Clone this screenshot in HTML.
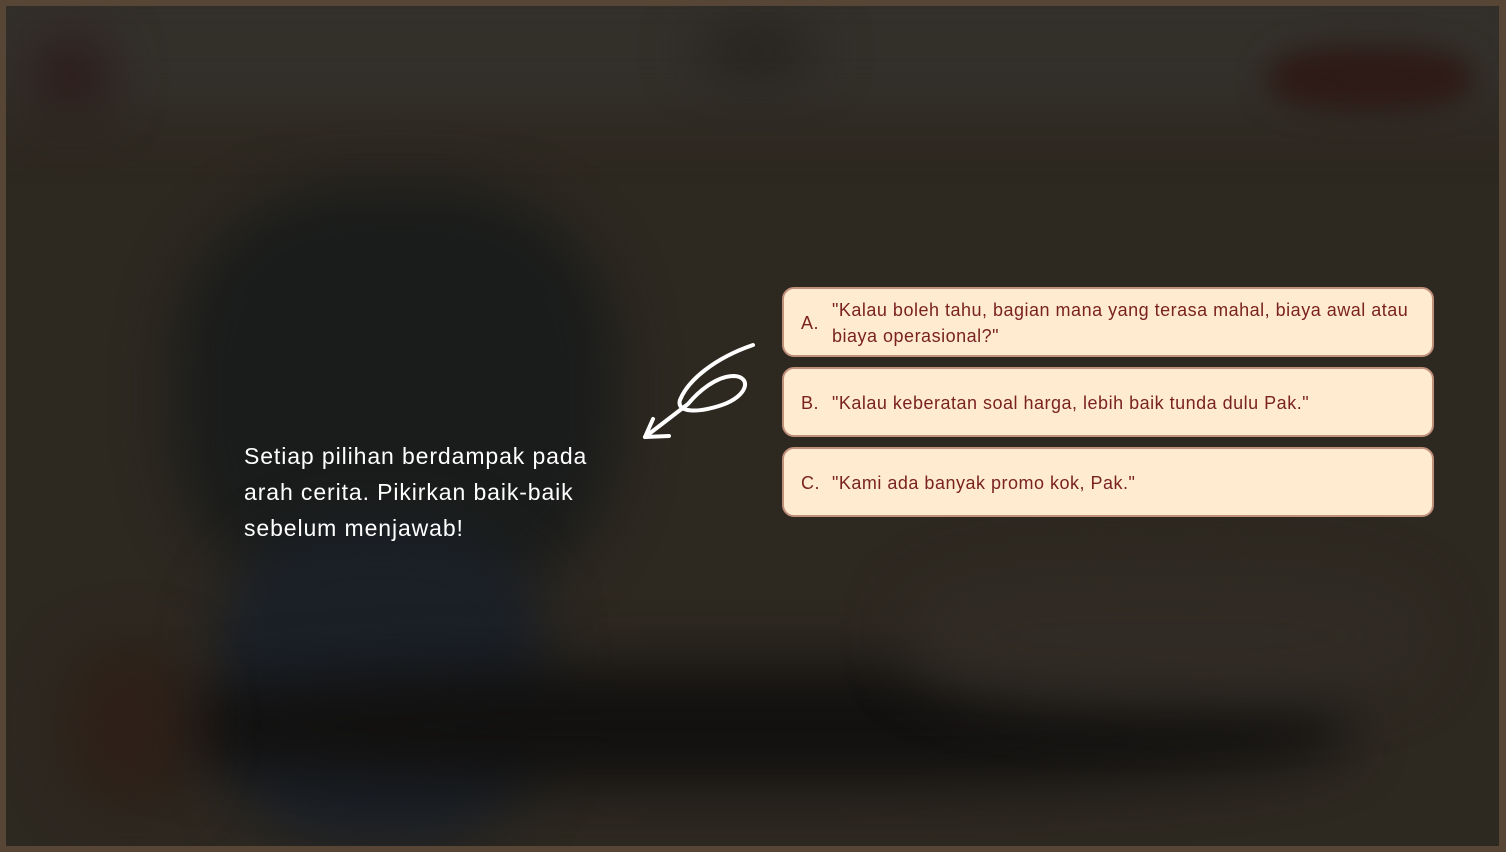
<!DOCTYPE html>
<html><head><meta charset="utf-8"><style>
html,body{margin:0;padding:0;width:1506px;height:852px;overflow:hidden;background:#574535;}
.frame{position:absolute;left:6px;top:6px;width:1493px;height:840px;overflow:hidden;background:#2d2820;}
.b{position:absolute;filter:blur(28px);border-radius:40%;}
.opt{position:absolute;left:782px;width:652px;background:#ffecd0;border:2px solid #c0907a;border-radius:12px;color:#7a2222;font-family:"Liberation Sans",sans-serif;font-size:18px;line-height:26px;letter-spacing:0.5px;box-sizing:border-box;}
.opt .l{position:absolute;left:17px;}
.opt .t{position:absolute;left:48px;right:10px;}
.txt{position:absolute;left:244px;top:438px;color:#fff;font-family:"Liberation Sans",sans-serif;font-size:23px;line-height:36px;letter-spacing:0.9px;width:360px;}
</style></head><body>
<div class="frame">
<div class="b" style="left:-40px;top:-40px;width:1580px;height:150px;background:#33302a;border-radius:0"></div>
<div class="b" style="left:30px;top:35px;width:70px;height:70px;background:#2c1818"></div>
<div class="b" style="left:690px;top:30px;width:120px;height:30px;background:#1d1a16"></div>
<div class="b" style="left:1262px;top:40px;width:205px;height:65px;background:#2e1a16;filter:blur(14px)"></div>
<div class="b" style="left:170px;top:180px;width:440px;height:420px;background:#1a1c1b"></div>
<div class="b" style="left:210px;top:520px;width:330px;height:320px;background:#1b2027"></div>
<div class="b" style="left:140px;top:660px;width:1200px;height:120px;background:#121110"></div>
<div class="b" style="left:60px;top:640px;width:130px;height:160px;background:#2e2018"></div>
<div class="b" style="left:900px;top:560px;width:520px;height:140px;background:#302b24"></div>
</div>
<svg style="position:absolute;left:0;top:0" width="1506" height="852"><g fill="none" stroke="#fff" stroke-width="4" stroke-linecap="round" stroke-linejoin="round">
<path d="M753,345 C715,358 688,380 680,400 C676,413 698,413 722,405 C748,396 752,377 734,376 C716,376 698,392 688,404 L645,437"/>
<path d="M653,419 L645,437 L669,436"/></g></svg>
<div class="opt" style="top:287px;height:70px"><span class="l" style="top:21px">A.</span><span class="t" style="top:8px">"Kalau boleh tahu, bagian mana yang terasa mahal, biaya awal atau biaya operasional?"</span></div>
<div class="opt" style="top:367px;height:70px"><span class="l" style="top:21px">B.</span><span class="t" style="top:21px">"Kalau keberatan soal harga, lebih baik tunda dulu Pak."</span></div>
<div class="opt" style="top:447px;height:70px"><span class="l" style="top:21px">C.</span><span class="t" style="top:21px">"Kami ada banyak promo kok, Pak."</span></div>
<div class="txt">Setiap pilihan berdampak pada arah cerita. Pikirkan baik-baik sebelum menjawab!</div>
</body></html>
